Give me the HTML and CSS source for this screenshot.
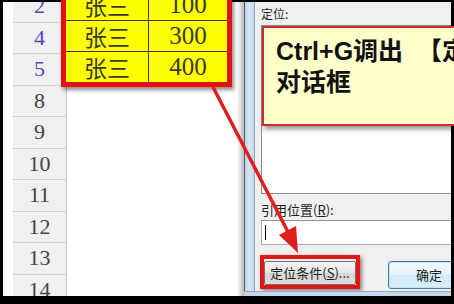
FILE: index.html
```html
<!DOCTYPE html>
<html lang="zh-CN">
<head>
  <meta charset="UTF-8">
  <title>定位</title>
  <link rel="stylesheet" href="styles.css">
</head>
<body>
  <div class="screen">
    <div class="sheet">
      <div class="lead"></div>
      <div class="rowhead">
        <div class="rownum hidden-rows">2</div>
        <div class="rownum hidden-rows">4</div>
        <div class="rownum hidden-rows">5</div>
        <div class="rownum">8</div>
        <div class="rownum">9</div>
        <div class="rownum">10</div>
        <div class="rownum">11</div>
        <div class="rownum">12</div>
        <div class="rownum">13</div>
        <div class="rownum">14</div>
      </div>
      <div class="cells"></div>
    </div>

    <div class="dialog">
      <div class="dialog-main">
        <div class="frame-left"></div>
        <div class="panel">
          <div class="label">定位:</div>
          <div class="listbox"></div>
          <div class="label label-ref">引用位置(<u>R</u>):</div>
          <div class="input"><span class="caret"></span></div>
          <div class="buttons">
            <div class="mark">
              <button class="btn">定位条件(<u>S</u>)...</button>
            </div>
            <button class="btn btn-default">确定</button>
          </div>
        </div>
      </div>
      <div class="frame-bottom"></div>
    </div>

    <!-- recorte pegado encima de la hoja -->
    <div class="callout-table">
      <div class="cell">张三</div>
      <div class="cell num">100</div>
      <div class="cell">张三</div>
      <div class="cell num">300</div>
      <div class="cell">张三</div>
      <div class="cell num">400</div>
    </div>

    <div class="note">Ctrl+G调出<span class="bracket">【定位】</span><br>对话框</div>

    <svg class="arrow" width="454" height="304" viewBox="0 0 454 304">
      <line x1="213" y1="87" x2="288" y2="232" stroke="#e11d1d" stroke-width="3.5" />
      <polygon points="298,253 279,235 296,226" fill="#e11d1d" />
    </svg>
  </div>
</body>
</html>
```

FILE: styles.css
```css
body {
  margin: 0;
  padding: 0;
  background-color: #000;
}

.screen {
  position: relative;
  width: 454px;
  height: 304px;
  box-sizing: border-box;
  padding: 2px 3px 8px 3px;
  display: flex;
  overflow: hidden;
  background-color: #000;
}

/* hoja de cálculo */
.sheet {
  flex: 0 0 241px;
  display: flex;
  background-color: #fff;
  overflow: hidden;
}

.lead {
  width: 10px;
}

.rowhead {
  width: 53px;
  margin-top: -11px;
  background-color: #f0f0f0;
  border-right: 1px solid #c6c6c6;
  display: flex;
  flex-direction: column;
}

.rownum {
  flex: 0 0 31.5px;
  box-sizing: border-box;
  border-bottom: 1px solid #d2d2d2;
  display: flex;
  justify-content: center;
  align-items: center;
  font-family: "Liberation Serif", serif;
  font-size: 22px;
  color: #444;
}

.rownum.hidden-rows {
  color: #4848c4;
}

.cells {
  flex: 1;
  background: linear-gradient(to right, #fff 0, #fff calc(100% - 7px), #b9b9b9 100%);
}

/* cuadro de diálogo */
.dialog {
  flex: 1;
  min-width: 0;
  display: flex;
  flex-direction: column;
  font-family: "Noto Sans CJK SC", sans-serif;
  color: #1e1e1e;
}

.dialog-main {
  flex: 1;
  display: flex;
  min-height: 0;
}

.frame-left {
  flex: 0 0 9px;
  border-left: 1px solid #4f5b68;
  border-right: 1px solid #8ea5bf;
  background: linear-gradient(to right, #bcd2ea, #d9e7f5, #c3d7ee);
}

.panel {
  flex: 1;
  min-width: 0;
  padding-left: 6px;
  background-color: #f0f0f0;
  display: flex;
  flex-direction: column;
  overflow: hidden;
}

.label {
  padding-top: 4px;
  font-size: 12px;
  line-height: 16px;
  white-space: nowrap;
}

.label-ref {
  margin-top: 8px;
  padding-top: 0;
  font-size: 13px;
}

.listbox {
  flex: 0 0 auto;
  margin-top: 3px;
  height: 169px;
  width: 240px;
  box-sizing: border-box;
  border: 1px solid #8a8e96;
  background-color: #fff;
}

.input {
  flex: 0 0 auto;
  margin-top: 2px;
  height: 25px;
  width: 240px;
  box-sizing: border-box;
  border: 1px solid #abadb3;
  border-top-color: #8e9198;
  background-color: #fff;
  display: flex;
  align-items: center;
  padding-left: 3px;
}

.caret {
  width: 1px;
  height: 15px;
  background-color: #000;
}

.buttons {
  margin-top: 10px;
  display: flex;
  align-items: flex-end;
  gap: 28px;
  margin-left: -1px;
}

.mark {
  flex: 0 0 auto;
  border: 4px solid #e41515;
  box-shadow: 2px 2px 4px rgba(0, 0, 0, 0.45);
}

.btn {
  height: 24px;
  width: 92px;
  padding: 0;
  border: 1px solid #707070;
  border-radius: 2px;
  background: linear-gradient(#f4f4f4, #e6e6e6 50%, #d6d6d6 51%, #dcdcdc);
  font-family: "Noto Sans CJK SC", sans-serif;
  font-size: 13px;
  color: #1e1e1e;
  white-space: nowrap;
}

.btn-default {
  flex: 0 0 auto;
  height: 28px;
  width: 100px;
  border: 1px solid #3c7fb1;
  border-radius: 3px;
  background: linear-gradient(#f5fbfe, #e4f3fc 50%, #cfeafb 51%, #d9effc);
  box-shadow: inset 0 0 0 1px #bfe4f8;
  text-align: left;
  padding-left: 27px;
}

.frame-bottom {
  height: 4px;
  border-top: 1px solid #9aa6b4;
  background-color: #c3d7ee;
}

/* tabla amarilla encima */
.callout-table {
  position: absolute;
  left: 61px;
  top: -15px;
  display: grid;
  grid-template-columns: 82px 78px;
  grid-auto-rows: 30px;
  gap: 1px;
  background-color: #3a3a3a;
  border: 5px solid #e50f0f;
  box-shadow: 2px 3px 4px rgba(0, 0, 0, 0.45);
}

.cell {
  background-color: #ffff00;
  display: flex;
  justify-content: center;
  align-items: center;
  font-family: "Noto Sans CJK SC", sans-serif;
  font-size: 23px;
  color: #3a3a2e;
}

.cell.num {
  font-family: "Liberation Serif", serif;
  font-size: 25px;
}

/* nota */
.note {
  position: absolute;
  left: 262px;
  top: 26px;
  width: 220px;
  height: 88px;
  padding: 8px 0 0 12px;
  border: 2px solid #d62a2a;
  background-color: #ffffcc;
  box-shadow: 2px 3px 5px rgba(0, 0, 0, 0.45);
  font-family: "Liberation Sans", "Noto Sans CJK SC", sans-serif;
  font-weight: bold;
  font-size: 25px;
  line-height: 31px;
  color: #111;
  white-space: nowrap;
}

.bracket {
  margin-left: 14px;
}

.arrow {
  position: absolute;
  left: 0;
  top: 0;
}
```
